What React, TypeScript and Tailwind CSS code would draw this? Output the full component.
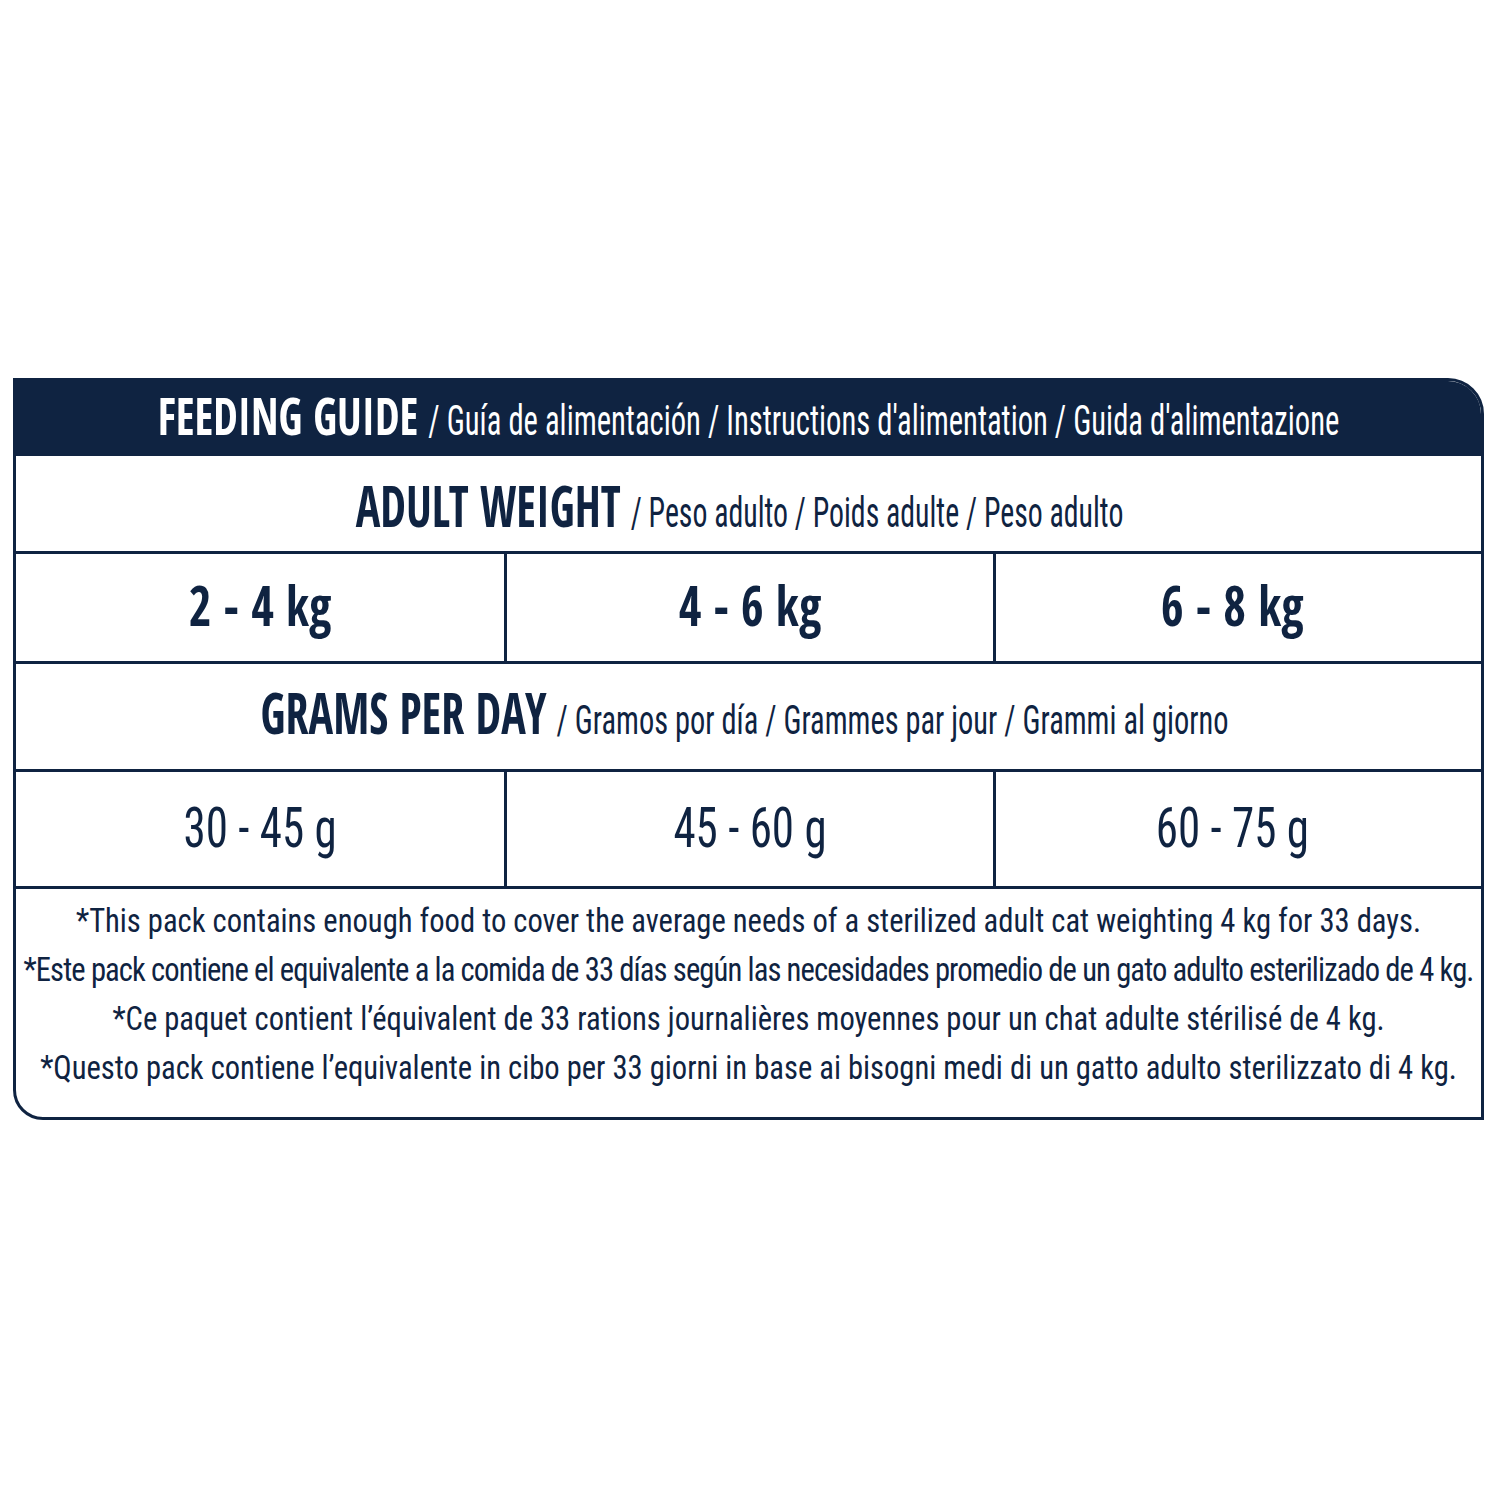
const BOLD = "font-['Open_Sans_Condensed','Roboto_Condensed',sans-serif] font-bold";
const REG = "font-['Roboto_Condensed','Open_Sans',sans-serif] font-normal";

export default function App() {
  return (
    <div className="w-[1500px] h-[1500px] bg-white pt-[378px] pl-[13px] text-[#0f2341]">
      <div className="w-[1471px] border-[3px] border-[#0f2341] rounded-tr-[36px] rounded-bl-[30px] overflow-hidden flex flex-col">
        {/* Header */}
        <div className="h-[75px] bg-[#0f2341] flex items-center justify-center text-white">
          <div className="flex items-baseline">
            <span className={`${BOLD} inline-block text-[44px] leading-none scale-y-[1.2] origin-[50%_89%]`}>FEEDING GUIDE</span>
            <span className={`${REG} inline-block ml-[10px] text-[30.6px] leading-none scale-y-[1.38] origin-[50%_84%]`}>
              / Guía de alimentación / Instructions d'alimentation / Guida d'alimentazione
            </span>
          </div>
        </div>

        {/* Adult weight */}
        <div className="h-[95px] flex items-center justify-center pt-[10px] pr-[18px]">
          <div className="flex items-baseline">
            <span className={`${BOLD} inline-block text-[46px] leading-none scale-y-[1.25] origin-[50%_89%]`}>ADULT WEIGHT</span>
            <span className={`${REG} inline-block ml-[10px] text-[29.8px] leading-none scale-y-[1.45] origin-[50%_84%]`}>
              / Peso adulto / Poids adulte / Peso adulto
            </span>
          </div>
        </div>

        {/* Weights */}
        <div className="h-[110px] border-t-[3px] border-[#0f2341] grid grid-cols-3">
          {["2 - 4 kg", "4 - 6 kg", "6 - 8 kg"].map((t, i) => (
            <div
              key={t}
              className={`flex items-center justify-center ${i > 0 ? "border-l-[3px] border-[#0f2341]" : ""} ${i === 2 ? "pr-[12px]" : ""}`}
            >
              <span className={`${BOLD} inline-block text-[49px] leading-none scale-y-[1.14] origin-[50%_89%]`}>{t}</span>
            </div>
          ))}
        </div>

        {/* Grams per day */}
        <div className="h-[108px] border-t-[3px] border-[#0f2341] flex items-center justify-center pr-[8px]">
          <div className="flex items-baseline">
            <span className={`${BOLD} inline-block text-[46px] leading-none scale-y-[1.25] origin-[50%_89%]`}>GRAMS PER DAY</span>
            <span className={`${REG} inline-block ml-[10px] text-[30.4px] leading-none scale-y-[1.35] origin-[50%_84%]`}>
              / Gramos por día / Grammes par jour / Grammi al giorno
            </span>
          </div>
        </div>

        {/* Values */}
        <div className="h-[117px] border-t-[3px] border-[#0f2341] grid grid-cols-3">
          {["30 - 45 g", "45 - 60 g", "60 - 75 g"].map((t, i) => (
            <div
              key={t}
              className={`flex items-center justify-center pt-[5px] ${i > 0 ? "border-l-[3px] border-[#0f2341]" : ""} ${i === 2 ? "pr-[12px]" : ""}`}
            >
              <span className={`${REG} inline-block text-[45px] leading-none scale-y-[1.25] origin-[50%_84%]`}>{t}</span>
            </div>
          ))}
        </div>

        {/* Notes */}
        <div className={`h-[231px] border-t-[3px] border-[#0f2341] pt-[8px] flex flex-col items-center ${REG} text-[30.6px] leading-[49px] whitespace-nowrap`}>
          <p className="scale-y-[1.1] origin-[50%_71%]">*This pack contains enough food to cover the average needs of a sterilized adult cat weighting 4 kg for 33 days.</p>
          <p className="scale-y-[1.1] origin-[50%_71%] tracking-[-0.029em]">*Este pack contiene el equivalente a la comida de 33 días según las necesidades promedio de un gato adulto esterilizado de 4 kg.</p>
          <p className="scale-y-[1.1] origin-[50%_71%]">*Ce paquet contient l’équivalent de 33 rations journalières moyennes pour un chat adulte stérilisé de 4 kg.</p>
          <p className="scale-y-[1.1] origin-[50%_71%]">*Questo pack contiene l’equivalente in cibo per 33 giorni in base ai bisogni medi di un gatto adulto sterilizzato di 4 kg.</p>
        </div>
      </div>
    </div>
  );
}
